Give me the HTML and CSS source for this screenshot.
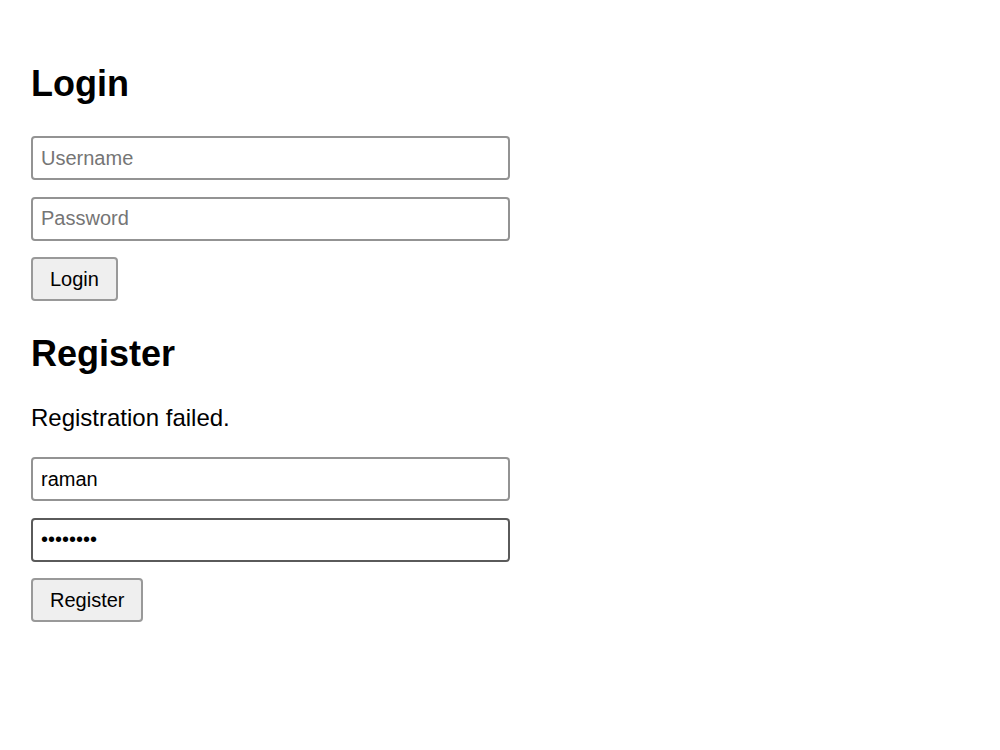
FILE: index.html
```html
<!DOCTYPE html>
<html lang="en">
<head>
    <meta charset="UTF-8">
    <meta name="viewport" content="width=device-width, initial-scale=1.0">
    <title>Login</title>
    <link rel="stylesheet" href="styles.css">
</head>
<body>
    <div class="page">
        <h1>Login</h1>
        <form class="auth-form" id="loginForm">
            <input type="text" class="field" placeholder="Username">
            <input type="password" class="field" placeholder="Password">
            <div><button type="submit" class="btn">Login</button></div>
        </form>

        <h1 class="section-title">Register</h1>
        <p class="message">Registration failed.</p>
        <form class="auth-form auth-form-tight" id="registerForm">
            <input type="text" class="field" value="raman">
            <input type="password" class="field field-active" value="12345678">
            <div><button type="submit" class="btn">Register</button></div>
        </form>
    </div>
</body>
</html>
```

FILE: styles.css
```css
body {
    margin: 0;
    background-color: #fff;
    color: #000;
    font-family: "Liberation Sans", Arial, sans-serif;
}

.page {
    padding: 63px 31px;
}

h1 {
    margin: 0;
    font-size: 36px;
    line-height: 41px;
    font-weight: bold;
}

.section-title {
    margin-top: 32px;
}

.message {
    margin: 30px 0 0;
    font-size: 24px;
    line-height: 28px;
}

.auth-form {
    display: flex;
    flex-direction: column;
    gap: 16.5px;
    margin-top: 32px;
}

.auth-form-tight {
    margin-top: 25px;
}

.field {
    box-sizing: border-box;
    width: 479px;
    height: 44px;
    margin: 0;
    padding: 0 8px;
    border: 2px solid #939393;
    border-radius: 4px;
    font-family: "Liberation Sans", Arial, sans-serif;
    font-size: 20px;
    color: #000;
    background: #fff;
    outline: none;
}

.field::placeholder {
    color: #757575;
}

.field-active {
    border-color: #5a5a5a;
}

.btn {
    box-sizing: border-box;
    height: 44px;
    margin: 0;
    padding: 0 17px;
    border: 2px solid #999;
    border-radius: 4px;
    background-color: #efefef;
    font-family: "Liberation Sans", Arial, sans-serif;
    font-size: 20px;
    color: #000;
}
```
